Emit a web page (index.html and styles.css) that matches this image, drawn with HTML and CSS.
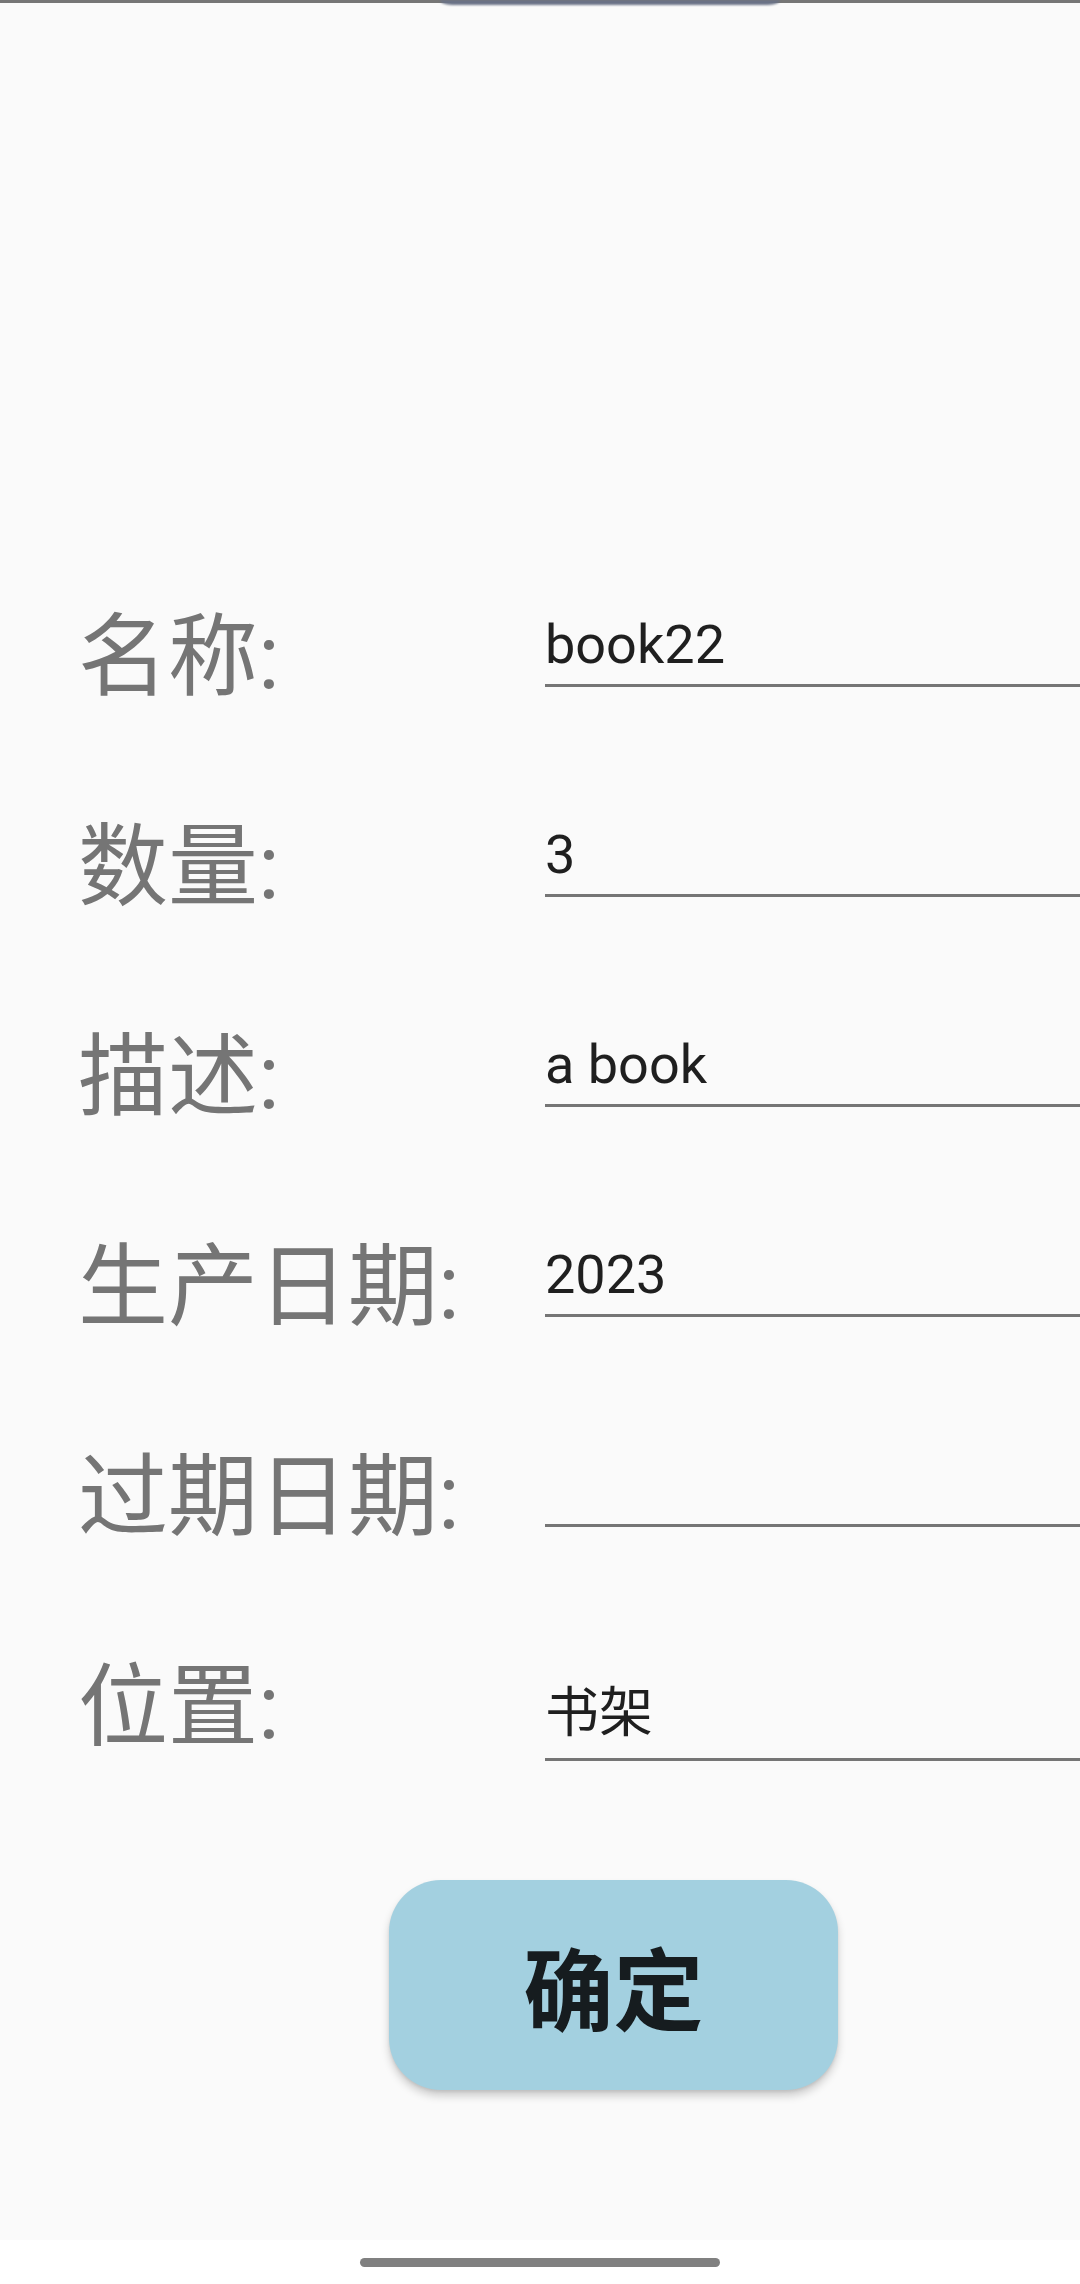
FILE: index.html
```html
<!DOCTYPE html>
<html lang="zh-CN">
<head>
<meta charset="utf-8">
<title>编辑物品</title>
<link rel="stylesheet" href="styles.css">
</head>
<body>
<div class="screen">
  <div class="topbar"><div class="shade"></div></div>
  <main class="content">
    <div class="form">
      <div class="row">
        <div class="label">名称:</div>
        <div class="field"><span class="value">book22</span></div>
      </div>
      <div class="row">
        <div class="label">数量:</div>
        <div class="field"><span class="value">3</span></div>
      </div>
      <div class="row">
        <div class="label">描述:</div>
        <div class="field"><span class="value">a book</span></div>
      </div>
      <div class="row">
        <div class="label">生产日期:</div>
        <div class="field"><span class="value">2023</span></div>
      </div>
      <div class="row">
        <div class="label">过期日期:</div>
        <div class="field"><span class="value"></span></div>
      </div>
      <div class="row">
        <div class="label">位置:</div>
        <div class="field field-tall"><span class="value">书架</span></div>
      </div>
    </div>
    <button class="confirm" type="button">确定</button>
  </main>
  <nav class="navbar"><span class="pill"></span></nav>
</div>
</body>
</html>
```

FILE: styles.css
```css
html, body {
  margin: 0;
  padding: 0;
}

body {
  background: #fafafa;
  font-family: "Roboto", "Noto Sans CJK SC", sans-serif;
}

.screen {
  width: 1080px;
  height: 2284px;
  display: flex;
  flex-direction: column;
  overflow: hidden;
}

.topbar {
  position: relative;
  height: 3px;
  background: #767676;
  flex: 0 0 auto;
}

.shade {
  position: absolute;
  left: 440px;
  top: 0;
  width: 340px;
  height: 5px;
  background: #6a7286;
  border-radius: 0 0 12px 12px / 0 0 5px 5px;
  filter: blur(0.8px);
}

.content {
  flex: 1 1 auto;
  background: #fafafa;
  display: flex;
  flex-direction: column;
}

.form {
  padding-top: 546px;
  display: flex;
  flex-direction: column;
}

.row {
  height: 210px;
  display: flex;
  align-items: center;
}

.label {
  flex: 0 0 545px;
  box-sizing: border-box;
  padding-left: 78px;
  padding-top: 7px;
  font-size: 90px;
  line-height: 100px;
  color: #757575;
  white-space: nowrap;
}

.field {
  flex: 1 1 auto;
  height: 66px;
  box-sizing: border-box;
  padding: 0 0 16px 0;
  border-bottom: 3px solid #757575;
  font-size: 54px;
  line-height: 47px;
  color: #1f1f1f;
}

.field-tall {
  height: 113px;
  padding-top: 42px;
  padding-bottom: 21px;
}

.value {
  display: block;
  height: 47px;
  white-space: nowrap;
}

.confirm {
  margin: 71px 0 0 389px;
  width: 449px;
  height: 210px;
  border: none;
  border-radius: 52px;
  background: #a3d0e0;
  color: #161c1f;
  font-family: "Noto Sans CJK SC", sans-serif;
  font-weight: 700;
  font-size: 90px;
  line-height: 90px;
  padding: 0;
  display: flex;
  align-items: center;
  justify-content: center;
  box-shadow: 0 6px 8px rgba(0, 0, 0, 0.18), 0 2px 3px rgba(0, 0, 0, 0.08);
}

.navbar {
  flex: 0 0 44px;
  background: #ffffff;
  display: flex;
  justify-content: center;
  align-items: flex-start;
}

.pill {
  margin-top: 18px;
  width: 360px;
  height: 9px;
  border-radius: 5px;
  background: #808080;
}
```
